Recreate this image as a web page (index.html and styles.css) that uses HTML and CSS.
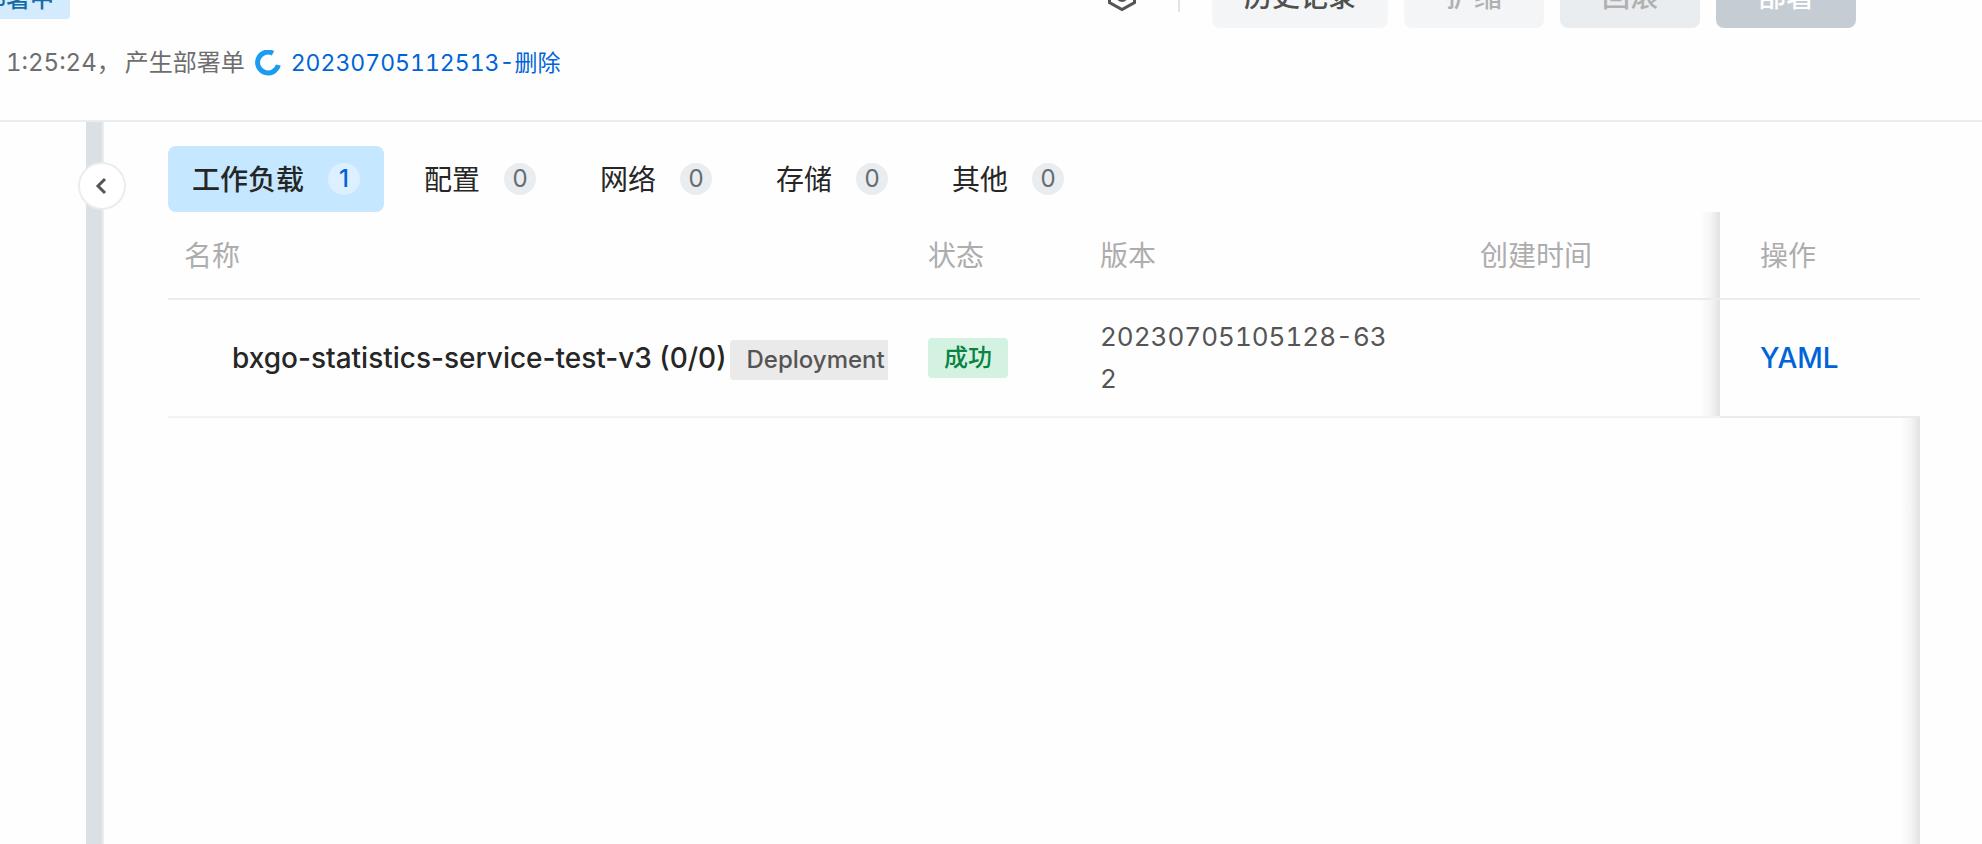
FILE: index.html
```html
<!DOCTYPE html>
<html lang="zh-CN">
<head>
  <meta charset="UTF-8" />
  <meta name="viewport" content="width=device-width, initial-scale=1.0"/>
  <title>部署详情</title>
  <link rel="stylesheet" href="styles.css">
</head>
<body>
  <header class="page-header">
    <div class="header-top">
      <span class="tag tag-deploying">部署中</span>
      <div class="header-actions">
        <button class="btn-icon" aria-label="设置">
          <svg width="32" height="32" viewBox="0 0 32 32" fill="none" stroke="#555" stroke-width="3">
            <path d="M16 2.5 28.5 9.5V22.5L16 29.5 3.5 22.5V9.5Z"/>
            <circle cx="16" cy="16" r="4.5"/>
          </svg>
        </button>
        <span class="divider"></span>
        <button class="btn">历史记录</button>
        <button class="btn" disabled>扩缩</button>
        <button class="btn btn-rollback" disabled>回滚</button>
        <button class="btn btn-deploy" disabled>部署</button>
      </div>
    </div>
    <div class="header-info">
      <span>1:25:24，</span>
      <span class="order-label">产生部署单</span>
      <svg class="spinner" width="26" height="26" viewBox="0 0 26 26" fill="none" stroke="#1c9bf3" stroke-width="5">
        <path d="M18 3.2A10.5 10.5 0 1 0 23.3 15"/>
      </svg>
      <a class="order-link" href="#">20230705112513-删除</a>
    </div>
  </header>

  <div class="layout">
    <aside class="sidebar">
      <button class="btn-collapse" aria-label="收起">
        <svg width="16" height="20" viewBox="0 0 16 20" fill="none" stroke="#555" stroke-width="3">
          <path d="M12 3 5 10l7 7"/>
        </svg>
      </button>
    </aside>

    <main class="content">
      <nav class="tabs">
        <button class="tab active"><span>工作负载</span><span class="count">1</span></button>
        <button class="tab"><span>配置</span><span class="count">0</span></button>
        <button class="tab"><span>网络</span><span class="count">0</span></button>
        <button class="tab"><span>存储</span><span class="count">0</span></button>
        <button class="tab"><span>其他</span><span class="count">0</span></button>
      </nav>

      <div class="table-wrap">
        <table>
          <thead>
            <tr>
              <th class="col-name">名称</th>
              <th class="col-status">状态</th>
              <th class="col-version">版本</th>
              <th class="col-time">创建时间</th>
              <th class="col-action">操作</th>
            </tr>
          </thead>
          <tbody>
            <tr>
              <td class="col-name"><div class="workload"><span>bxgo-statistics-service-test-v3 (0/0)</span><span class="tag tag-kind">Deployment</span></div></td>
              <td><span class="tag tag-success">成功</span></td>
              <td class="col-version">20230705105128-632</td>
              <td class="col-time"></td>
              <td class="col-action"><a href="#">YAML</a></td>
            </tr>
          </tbody>
        </table>
        <div class="table-rest"></div>
      </div>
    </main>
  </div>
</body>
</html>
```

FILE: styles.css
```css
* {
  box-sizing: border-box;
}

body {
  display: flex;
  flex-direction: column;
  height: 100vh;
  margin: 0;
  overflow: hidden;
  background-color: #fefefe;
  color: #262626;
  font-family: Inter, "Noto Sans CJK SC", sans-serif;
  font-size: 28px;
  line-height: 42px;
}

button {
  border: none;
  font: inherit;
  cursor: pointer;
}

a {
  color: #0064d8;
  text-decoration: none;
}

/* header is scrolled partly out of view */
.page-header {
  flex: none;
  height: 158px;
  margin-top: -36px;
  border-bottom: 2px solid #e9edf0;
}

.header-top {
  display: flex;
  align-items: center;
  justify-content: space-between;
  height: 64px;
  padding-right: 126px;
}

.header-actions {
  display: flex;
  align-items: center;
  gap: 16px;
}

.tag {
  display: block;
  width: fit-content;
  height: 40px;
  padding: 0 16px;
  border-radius: 4px;
  font-size: 24px;
  font-weight: 500;
  line-height: 40px;
}

.tag-deploying {
  margin-top: 6px;
  margin-left: -34px;
  background-color: #d3ebfc;
  color: #156ba8;
}

.tag-kind {
  margin-top: 4px;
  margin-left: 4px;
  background-color: #eaeaea;
  color: #555;
}

.tag-success {
  background-color: #d3f2e2;
  color: #0b8342;
}

.btn {
  min-width: 140px;
  height: 64px;
  padding: 2px 32px 0;
  border-radius: 8px;
  background-color: #f3f5f7;
  color: #505050;
  font-weight: 500;
}

.btn:disabled {
  color: #b0b0b0;
  cursor: not-allowed;
}

.btn-rollback {
  background-color: #e9edf0;
}

.btn.btn-deploy {
  background-color: #c6ccd4;
  color: #fff;
}

.btn-icon {
  display: flex;
  margin-right: 24px;
  padding: 0;
  background: none;
}

.divider {
  width: 2px;
  height: 32px;
  margin-right: 16px;
  background-color: #dfe4e9;
}

.header-info {
  display: flex;
  align-items: center;
  margin-top: 14px;
  padding-left: 6px;
  color: #6e6e6e;
  font-size: 24px;
  font-variant-numeric: tabular-nums;
}

.order-label {
  margin-left: 4px;
}

.order-link {
  font-size: 23px;
}

.spinner {
  margin: 0 10px;
}

.layout {
  display: flex;
  flex: 1;
  min-height: 0;
}

.sidebar {
  position: relative;
  flex: none;
  width: 104px;
  border-right: 2px solid #e9edf0;
  background: linear-gradient(#dae0e3, #dae0e3) right / 16px 100% no-repeat;
}

.btn-collapse {
  position: absolute;
  top: 40px;
  right: -24px;
  display: flex;
  align-items: center;
  justify-content: center;
  width: 48px;
  height: 48px;
  padding: 0 2px 0 0;
  border: 2px solid #e9edf0;
  border-radius: 50%;
  background-color: #fff;
}

.content {
  display: flex;
  flex: 1;
  flex-direction: column;
  padding: 24px 62px 0 64px;
}

.tabs {
  display: flex;
  gap: 16px;
}

.tab {
  display: flex;
  align-items: center;
  gap: 24px;
  height: 66px;
  padding: 0 24px;
  border-radius: 8px;
  background: none;
  color: #262626;
}

.tab span:first-child {
  padding-top: 2px;
}

.tab.active {
  background-color: #c5e7ff;
  font-weight: 500;
}

.count {
  width: 32px;
  height: 32px;
  border-radius: 50%;
  background-color: #e9edf0;
  color: #666b73;
  font-size: 24px;
  line-height: 32px;
  text-align: center;
}

.active .count {
  background-color: #ddf0ff;
  color: #0064d8;
}

.table-wrap {
  display: flex;
  flex: 1;
  flex-direction: column;
}

table {
  width: 100%;
  border-collapse: separate;
  border-spacing: 0;
  table-layout: fixed;
}

th, td {
  padding: 0 40px;
  text-align: left;
}

th {
  height: 88px;
  padding-top: 2px;
  border-bottom: 2px solid #e9edf0;
  color: #adadad;
  font-weight: 400;
}

td {
  height: 118px;
  border-bottom: 2px solid #f2f3f4;
  color: #555;
}

.col-name {
  padding-right: 0;
  padding-left: 16px;
}

.col-status {
  width: 172px;
}

.col-version {
  width: 380px;
}

td.col-version {
  font-size: 26px;
  font-variant-numeric: tabular-nums;
  word-break: break-all;
}

.col-time {
  width: 280px;
}

.col-action {
  width: 200px;
}

td.col-action {
  border-bottom-color: #ebebeb;
  font-weight: 500;
}

.workload {
  display: flex;
  align-items: center;
  padding-left: 48px;
  overflow: hidden;
  color: #262626;
  font-weight: 500;
  white-space: nowrap;
}

/* shadow of the fixed column, falls to its left */
.col-time, .table-rest {
  background: linear-gradient(to left, #e2e2e2, #f6f6f6 50%, #fefefe) right / 20px 100% no-repeat;
}

.table-rest {
  flex: 1;
}
```
